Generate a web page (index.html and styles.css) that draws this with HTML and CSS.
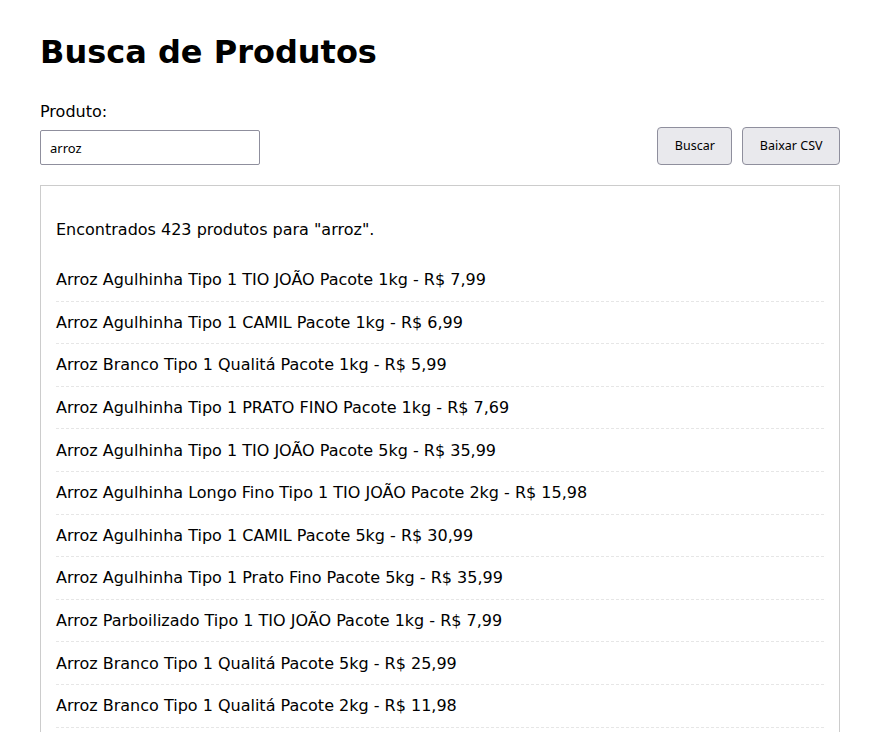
FILE: index.html
```html
<!DOCTYPE html>
<html lang="pt-BR">
<head>
<meta charset="utf-8">
<title>Busca de Produtos</title>
<link rel="stylesheet" href="styles.css">
</head>
<body>
<div class="page">
  <h1 class="title">Busca de Produtos</h1>
  <div class="search-row">
    <div class="field">
      <label class="label" for="q">Produto:</label>
      <input class="input" id="q" type="text" value="arroz">
    </div>
    <div class="actions">
      <button class="btn" type="button">Buscar</button>
      <button class="btn" type="button">Baixar CSV</button>
    </div>
  </div>
  <div class="results">
    <p class="summary">Encontrados 423 produtos para "arroz".</p>
    <ul class="list">
      <li class="item">Arroz Agulhinha Tipo 1 TIO JOÃO Pacote 1kg - R$ 7,99</li>
      <li class="item">Arroz Agulhinha Tipo 1 CAMIL Pacote 1kg - R$ 6,99</li>
      <li class="item">Arroz Branco Tipo 1 Qualitá Pacote 1kg - R$ 5,99</li>
      <li class="item">Arroz Agulhinha Tipo 1 PRATO FINO Pacote 1kg - R$ 7,69</li>
      <li class="item">Arroz Agulhinha Tipo 1 TIO JOÃO Pacote 5kg - R$ 35,99</li>
      <li class="item">Arroz Agulhinha Longo Fino Tipo 1 TIO JOÃO Pacote 2kg - R$ 15,98</li>
      <li class="item">Arroz Agulhinha Tipo 1 CAMIL Pacote 5kg - R$ 30,99</li>
      <li class="item">Arroz Agulhinha Tipo 1 Prato Fino Pacote 5kg - R$ 35,99</li>
      <li class="item">Arroz Parboilizado Tipo 1 TIO JOÃO Pacote 1kg - R$ 7,99</li>
      <li class="item">Arroz Branco Tipo 1 Qualitá Pacote 5kg - R$ 25,99</li>
      <li class="item">Arroz Branco Tipo 1 Qualitá Pacote 2kg - R$ 11,98</li>
    </ul>
  </div>
</div>
</body>
</html>
```
FILE: styles.css
```css
html, body {
  margin: 0;
  padding: 0;
  background: #ffffff;
  color: #000000;
  font-family: "DejaVu Sans", sans-serif;
  font-size: 16px;
}

.page {
  padding: 13px 46px 0 40px;
}

.title {
  font-size: 32px;
  font-weight: bold;
  margin: 21px 0 31px;
  line-height: 37px;
}

.search-row {
  display: flex;
  justify-content: space-between;
  align-items: flex-end;
}

.field {
  display: flex;
  flex-direction: column;
  align-items: flex-start;
}

.label {
  line-height: 19px;
  margin-bottom: 9px;
}

.input {
  box-sizing: border-box;
  width: 220px;
  height: 35px;
  padding: 0 9px;
  border: 1px solid #8f8f9d;
  border-radius: 2px;
  font-family: "Noto Sans", sans-serif;
  font-size: 13px;
  color: #000;
  background: #fff;
  margin: 0;
}

.actions {
  display: flex;
  gap: 10px;
}

.btn {
  box-sizing: border-box;
  height: 38.5px;
  padding: 0 16.5px;
  border: 1px solid #8f8f9d;
  border-radius: 4px;
  background: #e9e9ed;
  font-family: "Noto Sans", sans-serif;
  font-size: 12.5px;
  color: #000;
  margin: 0;
}

.results {
  margin-top: 20px;
  border: 1px solid #cccccc;
  padding: 15px 15px 30px;
}

.summary {
  margin: 19px 0 20px;
  line-height: 19px;
}

.list {
  list-style: none;
  margin: 0;
  padding: 0;
}

.item {
  padding: 11.3px 0;
  line-height: 19px;
  border-bottom: 1px dashed #e6e6e6;
}
```
